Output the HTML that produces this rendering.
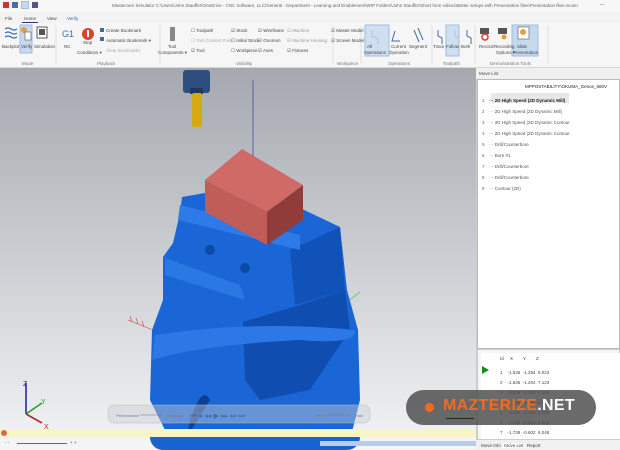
<!DOCTYPE html>
<html><head><meta charset="utf-8"><style>
*{margin:0;padding:0;box-sizing:border-box}
body{width:620px;height:450px;overflow:hidden;font-family:"Liberation Sans",sans-serif;background:#f3f3f3;position:relative;font-size:5px;color:#333}
.a{position:absolute;white-space:nowrap}
.t{font-size:4.5px;color:#444}
.sel{background:#c5d9ee;border:1px solid #9fbddd}
</style></head><body>
<div class="a" style="left:0;top:0;width:620px;height:12px;background:#f7f7f7"></div>
<div class="a" style="left:3px;top:2px;width:6px;height:6px;background:#c33"></div>
<div class="a" style="left:12px;top:2px;width:6px;height:6px;background:#4a6fa5"></div>
<div class="a sel" style="left:21px;top:1px;width:8px;height:8px"></div>
<div class="a" style="left:32px;top:2px;width:6px;height:6px;background:#557"></div>
<div class="a t" style="left:112px;top:3px;color:#666">Mastercam Simulator C:\Users\John.Stauffer\OneDrive - CNC Software, LLC\General - Department - Learning and Enablement\WIP Folders\John Stauffer\Short form videos\Better setups with Presentation files\Presentation files.mcam</div>
<div class="a t" style="left:600px;top:2px">—</div>
<div class="a t" style="left:5px;top:16px">File</div>
<div class="a t" style="left:24px;top:16px">Home</div>
<div class="a" style="left:22px;top:22px;width:16px;height:1px;background:#336"></div>
<div class="a t" style="left:47px;top:16px">View</div>
<div class="a t" style="left:67px;top:16px;color:#3366aa">Verify</div>
<div class="a" style="left:0;top:23px;width:620px;height:45px;background:#f6f6f6;border-bottom:1px solid #d8d8d8"></div>
<svg class="a" style="left:0;top:24px" width="620" height="44">
<g fill="none" stroke="#3a6ea5" stroke-width="1.2"><path d="M5 5q3-2 6 0t6 0M5 9q3-2 6 0t6 0M5 13q3-2 6 0t6 0"/></g>
<rect x="20" y="1" width="12" height="28" fill="#c5d9ee" stroke="#9fbddd"/>
<circle cx="24" cy="6" r="3" fill="#e0a040"/><rect x="25" y="8" width="6" height="8" fill="#fff" stroke="#555" stroke-width=".6"/>
<rect x="37" y="3" width="10" height="11" fill="#fff" stroke="#333" stroke-width=".8"/><rect x="39" y="5" width="6" height="6" fill="#555"/>
<text x="62" y="13" font-size="9" fill="#3a6ea5" font-family="Liberation Sans">G1</text>
<circle cx="88" cy="10" r="6" fill="#d9442c"/><rect x="87" y="6" width="2" height="7" fill="#fff"/>
<rect x="100" y="4" width="4" height="4" fill="#3a6ea5"/><rect x="100" y="13" width="4" height="4" fill="#3a6ea5"/>
<rect x="170" y="3" width="5" height="14" fill="#888"/>
<g fill="none" stroke="#3a6ea5" stroke-width="1"><path d="M372 6v6l6 3v5M395 7l-3 10h8M414 6l5 12M418 4l5 12"/><path d="M438 6v6l4 2v6M455 6v6l4 2v6M467 6v6l4 2v6"/></g>
<rect x="365" y="1" width="24" height="31" fill="#c5d9ee" stroke="#9fbddd" fill-opacity=".8"/>
<rect x="446" y="1" width="13" height="31" fill="#c5d9ee" stroke="#9fbddd" fill-opacity=".8"/>
<rect x="512" y="1" width="26" height="31" fill="#c5d9ee" stroke="#9fbddd"/>
<rect x="480" y="4" width="9" height="6" fill="#555"/><circle cx="485" cy="13" r="3" fill="none" stroke="#d33" stroke-width="1.5"/>
<rect x="498" y="4" width="9" height="6" fill="#555"/><circle cx="504" cy="13" r="2.5" fill="#e0a040"/>
<rect x="518" y="3" width="11" height="12" fill="#fff" stroke="#555" stroke-width=".6"/><circle cx="523" cy="8" r="3" fill="#e0a040"/>
<g stroke="#ddd"><path d="M56 2v38M160 2v38M333 2v38M361 2v38M432 2v38M475 2v38M548 2v38"/></g>
</svg>
<div class="a t" style="left:2px;top:44px">Backplot</div>
<div class="a t" style="left:21px;top:44px">Verify</div>
<div class="a t" style="left:34px;top:44px">Simulation</div>
<div class="a t" style="left:64px;top:44px">NC</div>
<div class="a t" style="left:83px;top:40px">Stop</div>
<div class="a t" style="left:77px;top:50px">Conditions ▾</div>
<div class="a t" style="left:106px;top:28px">Create Bookmark</div>
<div class="a t" style="left:106px;top:38px">Automatic Bookmark ▾</div>
<div class="a t" style="left:106px;top:48px;color:#aaa">Clear Bookmarks</div>
<div class="a t" style="left:168px;top:44px">Tool</div>
<div class="a t" style="left:158px;top:50px">Components ▾</div>
<div class="a t" style="left:191px;top:28px">☐ Toolpath</div>
<div class="a t" style="left:191px;top:38px;color:#aaa">☐ Tool Contact Point</div>
<div class="a t" style="left:191px;top:48px">☑ Tool</div>
<div class="a t" style="left:231px;top:28px">☑ Stock</div>
<div class="a t" style="left:231px;top:38px">☐ Initial Stock</div>
<div class="a t" style="left:231px;top:48px">☐ Workpiece</div>
<div class="a t" style="left:258px;top:28px">☑ Wireframe</div>
<div class="a t" style="left:258px;top:38px">☑ Gnomon</div>
<div class="a t" style="left:258px;top:48px">☑ Axes</div>
<div class="a t" style="left:287px;top:28px;color:#999">☑ Machine</div>
<div class="a t" style="left:287px;top:38px;color:#999">☑ Machine Housing</div>
<div class="a t" style="left:287px;top:48px">☑ Fixtures</div>
<div class="a t" style="left:331px;top:28px">☑ Master Model</div>
<div class="a t" style="left:331px;top:38px">☑ Screen Model</div>
<div class="a t" style="left:367px;top:44px">All</div>
<div class="a t" style="left:364px;top:50px">Operations</div>
<div class="a t" style="left:391px;top:44px">Current</div>
<div class="a t" style="left:389px;top:50px">Operation</div>
<div class="a t" style="left:409px;top:44px">Segment</div>
<div class="a t" style="left:433px;top:44px">Trace</div>
<div class="a t" style="left:446px;top:44px">Follow</div>
<div class="a t" style="left:461px;top:44px">Both</div>
<div class="a t" style="left:479px;top:44px">Record</div>
<div class="a t" style="left:494px;top:44px">Recording</div>
<div class="a t" style="left:496px;top:50px">Options ▾</div>
<div class="a t" style="left:517px;top:44px">Slide</div>
<div class="a t" style="left:513px;top:50px">Presentation</div>
<div class="a t" style="left:22px;top:61px;color:#777">Mode</div>
<div class="a t" style="left:97px;top:61px;color:#777">Playback</div>
<div class="a t" style="left:236px;top:61px;color:#777">Visibility</div>
<div class="a t" style="left:337px;top:61px;color:#777">Workpiece</div>
<div class="a t" style="left:388px;top:61px;color:#777">Operations</div>
<div class="a t" style="left:443px;top:61px;color:#777">Toolpath</div>
<div class="a t" style="left:490px;top:61px;color:#777">Demonstration Tools</div>
<div class="a" style="left:0;top:68px;width:476px;height:362px;background:linear-gradient(#a5a9af,#cdd0d4 55%,#eff0f2)"></div>
<svg class="a" style="left:0;top:0" width="476" height="450">
<line x1="253" y1="80" x2="253" y2="182" stroke="#3a3aaa" stroke-width=".7"/>
<rect x="183" y="70" width="27" height="23" rx="3" fill="#2e4f7e"/>
<rect x="190" y="88" width="13" height="6" fill="#1f3a60"/>
<rect x="192" y="93" width="10" height="34" rx="2" fill="#d4aa10"/>
<path d="M182 197L205 193 300 208 340 227 347 290 358 330 360 400 350 440 170 440 150 400 152 330 163 300 163 257 173 243 180 213Z" fill="#1a66d6"/>
<path d="M243 322L300 305 345 290 350 330 310 390 260 400 245 380Z" fill="#0f4eb0"/>
<path d="M290 250L340 227 345 290 295 305Z" fill="#1152b8"/>
<path d="M180 205L300 235 300 250 178 220Z" fill="#2d7ae8"/>
<path d="M165 258L240 285 245 300 165 275Z" fill="#2a78e4"/>
<path d="M155 335Q255 320 355 330 358 345 300 340 200 345 152 360Z" fill="#2b78e6"/>
<path d="M185 440Q200 380 210 400 200 440Z M235 440Q240 360 255 380 258 440Z M300 440Q310 390 320 395 325 440Z" fill="#0b3f92"/>
<circle cx="210" cy="250" r="5" fill="#0d4aa6"/><circle cx="245" cy="268" r="5" fill="#0d4aa6"/>
<path d="M205 180L242 149 303 185 267 212Z" fill="#d06a66"/>
<path d="M205 180L267 212 267 245 205 212Z" fill="#c05d58"/>
<path d="M267 212L303 185 303 220 267 245Z" fill="#8f3c3a"/>
<path d="M128 320l25 10M130 316l2 6M136 318l2 6M142 321l2 6" stroke="#c44" stroke-width=".6"/>
<path d="M350 300l10 -8" stroke="#4b4" stroke-width=".6"/>
<line x1="26" y1="383" x2="26" y2="414" stroke="#2a2aa0" stroke-width="1.6"/><text x="23" y="386" font-size="7" fill="#2a2aa0" font-family="Liberation Sans">Z</text>
<line x1="26" y1="414" x2="42" y2="403" stroke="#2a9a2a" stroke-width="1.6"/><text x="41" y="404" font-size="7" fill="#2a9a2a" font-family="Liberation Sans">Y</text>
<line x1="26" y1="414" x2="42" y2="423" stroke="#b02a2a" stroke-width="1.6"/><text x="44" y="429" font-size="7" fill="#b02a2a" font-family="Liberation Sans">X</text>
<rect x="108" y="405" width="262" height="18" rx="6" fill="#c8ccd2" fill-opacity=".45" stroke="#bbb" stroke-opacity=".5"/>
<text x="116" y="417" font-size="4" fill="#778" font-family="Liberation Sans">Performance</text>
<line x1="140" y1="415" x2="163" y2="415" stroke="#778" stroke-width=".5"/>
<text x="167" y="417" font-size="4" fill="#778" font-family="Liberation Sans">Precision</text>
<text x="190" y="418" font-size="7" fill="#3a6ea5" font-family="DejaVu Sans">⏮ ◂ ◂◂ ▶ ▸▸ ⏭ ⏭</text>
<text x="316" y="417" font-size="4" fill="#778" font-family="Liberation Sans">Slow</text>
<line x1="328" y1="415" x2="350" y2="415" stroke="#778" stroke-width=".5"/>
<text x="355" y="417" font-size="4" fill="#778" font-family="Liberation Sans">Fast</text>
</svg>
<div class="a" style="left:0;top:429px;width:476px;height:8px;background:#f7f5c6"></div>
<div class="a" style="left:1px;top:430px;width:6px;height:6px;border-radius:50%;background:#d96a50"></div>
<div class="a" style="left:0;top:437px;width:476px;height:13px;background:#f4f4f4"></div>
<div class="a" style="left:150px;top:437px;width:210px;height:13px;background:#1764d0;border-radius:0 0 40px 40px"></div>
<div class="a" style="left:320px;top:441px;width:156px;height:5px;background:#b9cce6"></div>
<div class="a" style="left:17px;top:443px;width:50px;height:1px;background:#667"></div>
<div class="a t" style="left:5px;top:440px">- -</div><div class="a t" style="left:70px;top:440px">+ +</div>
<div class="a" style="left:476px;top:68px;width:144px;height:382px;background:#fff;border-left:1px solid #ccc"></div>
<div class="a" style="left:476px;top:68px;width:144px;height:11px;background:#f0f0f0"></div>
<div class="a t" style="left:479px;top:71px">Move List</div>
<div class="a" style="left:477px;top:79px;width:143px;height:270px;border:1px solid #bbb"></div>
<div class="a t" style="left:525px;top:84px;color:#222">MPPOSTABILITY\OKUMA_Genos_560V</div>
<div class="a" style="left:491px;top:93px;width:78px;height:10px;background:#e8e8e8"></div>
<div class="a t" style="left:482px;top:95px;line-height:11px;color:#666">1<br>2<br>3<br>4<br>5<br>6<br>7<br>8<br>9</div>
<div class="a t" style="left:489px;top:95px;line-height:11px;color:#555"><b style="color:#222">··· 2D High Speed (2D Dynamic Mill)</b><br>··· 2D High Speed (2D Dynamic Mill)<br>··· 2D High Speed (2D Dynamic Contour<br>··· 2D High Speed (2D Dynamic Contour<br>··· Drill/Counterbore<br>··· Bore #1<br>··· Drill/Counterbore<br>··· Drill/Counterbore<br>··· Contour (2D)</div>
<div class="a" style="left:477px;top:349px;width:143px;height:91px;background:#f5f5f5;border:1px solid #ccc"></div>
<div class="a" style="left:481px;top:353px;width:139px;height:86px;background:#fff"></div>
<div class="a t" style="left:500px;top:356px">Id&nbsp;&nbsp;&nbsp;&nbsp;&nbsp;X&nbsp;&nbsp;&nbsp;&nbsp;&nbsp;&nbsp;&nbsp;&nbsp;Y&nbsp;&nbsp;&nbsp;&nbsp;&nbsp;&nbsp;&nbsp;&nbsp;Z</div>
<svg class="a" style="left:481px;top:365px" width="10" height="10"><path d="M1 1L8 5 1 9Z" fill="#1a8a1a"/></svg>
<div class="a t" style="left:500px;top:368px;line-height:10px;color:#444">1&nbsp;&nbsp;&nbsp;&nbsp;-1.536&nbsp;&nbsp;-1.294&nbsp;&nbsp;9.023<br>2&nbsp;&nbsp;&nbsp;&nbsp;-1.636&nbsp;&nbsp;-1.204&nbsp;&nbsp;7.123<br>3&nbsp;&nbsp;&nbsp;&nbsp;-1.636&nbsp;&nbsp;-1.204&nbsp;&nbsp;6.188<br>4&nbsp;&nbsp;&nbsp;&nbsp;-1.645&nbsp;&nbsp;-1.197&nbsp;&nbsp;6.153<br>5&nbsp;&nbsp;&nbsp;&nbsp;-1.690&nbsp;&nbsp;-1.153&nbsp;&nbsp;6.085<br>6&nbsp;&nbsp;&nbsp;&nbsp;-1.729&nbsp;&nbsp;-0.613&nbsp;&nbsp;6.048<br>7&nbsp;&nbsp;&nbsp;&nbsp;-1.738&nbsp;&nbsp;-0.602&nbsp;&nbsp;6.048</div>
<div class="a" style="left:476px;top:440px;width:144px;height:10px;background:#f0f0f0"></div>
<div class="a t" style="left:481px;top:443px">Move Info&nbsp;&nbsp;<span style="background:#fff;padding:0 1px">Move List</span>&nbsp;&nbsp;Report</div>
<div class="a" style="left:406px;top:390px;width:190px;height:35px;border-radius:18px;background:rgba(80,80,80,.85)"></div>
<div class="a" style="left:425px;top:403px;width:9px;height:9px;border-radius:50%;background:#f26b21"></div>
<div class="a" style="left:443px;top:397px;font-size:16px;font-weight:bold;color:#f26b21;letter-spacing:.3px">MAZTERIZE<span style="color:#fff">.NET</span></div>
<div class="a" style="left:446px;top:418px;width:28px;height:1px;background:#222"></div>
</body></html>
